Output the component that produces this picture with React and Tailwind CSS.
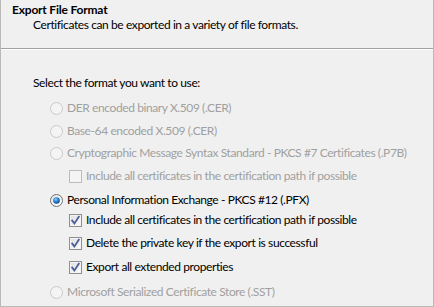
import React from "react";

function Radio({ checked, disabled }) {
  return (
    <svg width="13" height="13" viewBox="0 0 13 13" className="shrink-0">
      <defs>
        <linearGradient id="rbg" x1="0" y1="0" x2="1" y2="1">
          <stop offset="0" stopColor="#e6e6e6" />
          <stop offset="1" stopColor="#ffffff" />
        </linearGradient>
        <radialGradient id="rdot" cx="0.4" cy="0.35" r="0.7">
          <stop offset="0" stopColor="#8fd0ff" />
          <stop offset="0.5" stopColor="#2a7fd0" />
          <stop offset="1" stopColor="#0b3f7a" />
        </radialGradient>
      </defs>
      <circle
        cx="6.5"
        cy="6.5"
        r="6"
        fill={disabled ? "#f4f4f4" : "url(#rbg)"}
        stroke={disabled ? "#c8c8c8" : "#6e6e6e"}
        strokeWidth="1"
      />
      {checked && <circle cx="6.5" cy="6.5" r="3.3" fill="url(#rdot)" />}
    </svg>
  );
}

function Check({ checked, disabled }) {
  return (
    <svg width="13" height="13" viewBox="0 0 13 13" className="shrink-0">
      <defs>
        <linearGradient id="cbg" x1="0" y1="0" x2="1" y2="1">
          <stop offset="0" stopColor="#dcdcdc" />
          <stop offset="1" stopColor="#ffffff" />
        </linearGradient>
      </defs>
      <rect
        x="0.5"
        y="0.5"
        width="12"
        height="12"
        fill={disabled ? "#f4f4f4" : "url(#cbg)"}
        stroke={disabled ? "#bcbcbc" : "#8e8f8f"}
      />
      {!disabled && (
        <rect x="1.5" y="1.5" width="10" height="10" fill="none" stroke="#f4f4f4" strokeWidth="1" />
      )}
      {checked && (
        <path d="M3.2 6.6 L5.4 9.4 L9.8 2.8" fill="none" stroke="#4a5f97" strokeWidth="1.8" strokeLinecap="square" />
      )}
    </svg>
  );
}

function Row({ mt, indent, children }) {
  return (
    <div className={`flex items-center h-[20px] whitespace-nowrap ${mt} ${indent}`}>{children}</div>
  );
}

export default function App() {
  const font = { fontFamily: 'Lato, "Noto Sans", sans-serif' };
  return (
    <div
      className="w-[434px] h-[307px] bg-[#f0f0f0] border-l border-r border-b border-[#b9b9b9] flex flex-col text-[12px] leading-none tracking-[-0.4px] text-black overflow-hidden"
      style={font}
    >
      <div className="h-[48px] shrink-0 flex flex-col">
        <div className="pl-[11px] mt-[3px] h-[14px] font-bold flex items-center whitespace-nowrap tracking-[-0.2px]">Export File Format</div>
        <div className="pl-[32px] h-[14px] flex items-center mt-[1px] whitespace-nowrap">
          Certificates can be exported in a variety of file formats.
        </div>
      </div>
      <div className="h-px bg-[#a0a0a0] shrink-0" />
      <div className="h-px bg-white shrink-0" />
      <div className="flex flex-col">
        <Row mt="mt-[23px]" indent="pl-[32px]">
          Select the format you want to use:
        </Row>
        <Row mt="mt-[5px]" indent="pl-[49px] gap-[4px] text-[#a0a0a0]">
          <Radio disabled />
          DER encoded binary X.509 (.CER)
        </Row>
        <Row mt="mt-[3px]" indent="pl-[49px] gap-[4px] text-[#a0a0a0]">
          <Radio disabled />
          Base-64 encoded X.509 (.CER)
        </Row>
        <Row mt="mt-[2px]" indent="pl-[49px] gap-[4px] text-[#a0a0a0]">
          <Radio disabled />
          Cryptographic Message Syntax Standard - PKCS #7 Certificates (.P7B)
        </Row>
        <Row mt="mt-[3px]" indent="pl-[68px] gap-[4px] text-[#a0a0a0]">
          <Check disabled />
          Include all certificates in the certification path if possible
        </Row>
        <Row mt="mt-[4px]" indent="pl-[49px] gap-[4px]">
          <Radio checked />
          Personal Information Exchange - PKCS #12 (.PFX)
        </Row>
        <Row mt="mt-[0px]" indent="pl-[68px] gap-[4px]">
          <Check checked />
          Include all certificates in the certification path if possible
        </Row>
        <Row mt="mt-[3px]" indent="pl-[68px] gap-[4px]">
          <Check checked />
          Delete the private key if the export is successful
        </Row>
        <Row mt="mt-[4px]" indent="pl-[68px] gap-[4px]">
          <Check checked />
          Export all extended properties
        </Row>
        <Row mt="mt-[5px]" indent="pl-[49px] gap-[4px] text-[#a0a0a0]">
          <Radio disabled />
          Microsoft Serialized Certificate Store (.SST)
        </Row>
      </div>
    </div>
  );
}
